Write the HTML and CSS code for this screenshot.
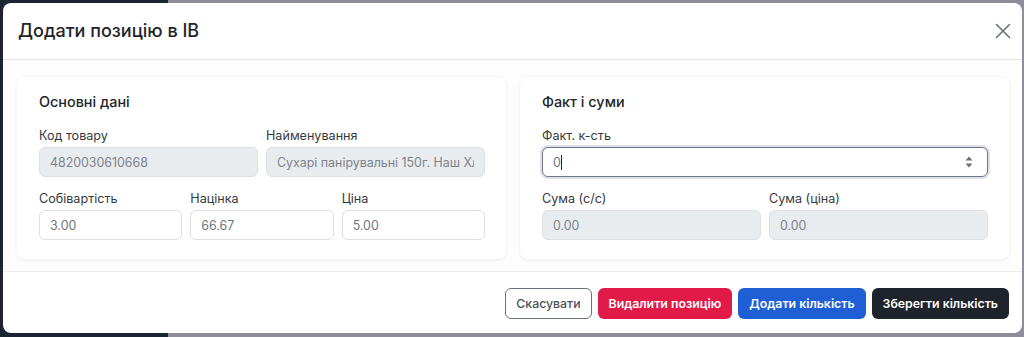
FILE: index.html
```html
<!DOCTYPE html>
<html lang="uk">
<head>
    <meta charset="UTF-8">
    <meta name="viewport" content="width=device-width, initial-scale=1.0">
    <title>Додати позицію в IB</title>
    <link rel="stylesheet" href="styles.css">
</head>
<body>
    <div class="modal">
        <header class="modal-header">
            <h1>Додати позицію в IB</h1>
            <button class="close-btn" aria-label="Закрити">
                <svg width="16" height="16" viewBox="0 0 16 16">
                    <path d="M1.5 1.5L14.5 14.5M14.5 1.5L1.5 14.5" stroke="#6b6f76" stroke-width="1.6" fill="none" stroke-linecap="round"/>
                </svg>
            </button>
        </header>
        <main class="modal-body">
            <section class="card">
                <h2>Основні дані</h2>
                <div class="row row-2">
                    <div class="field">
                        <label>Код товару</label>
                        <input class="input" type="text" value="4820030610668" disabled>
                    </div>
                    <div class="field">
                        <label>Найменування</label>
                        <input class="input" type="text" value="Сухарі панірувальні 150г. Наш Хлібокомбінат" disabled>
                    </div>
                </div>
                <div class="row row-3">
                    <div class="field">
                        <label>Собівартість</label>
                        <input class="input" type="text" value="3.00">
                    </div>
                    <div class="field">
                        <label>Націнка</label>
                        <input class="input" type="text" value="66.67">
                    </div>
                    <div class="field">
                        <label>Ціна</label>
                        <input class="input" type="text" value="5.00">
                    </div>
                </div>
            </section>
            <section class="card">
                <h2>Факт і суми</h2>
                <div class="row">
                    <div class="field">
                        <label>Факт. к-сть</label>
                        <div class="input input-focus">
                            <span class="value">0</span><span class="caret"></span>
                            <svg class="spinner" width="8" height="14" viewBox="0 0 8 14">
                                <path d="M4 1.5L7.5 5.5H0.5Z" fill="#6b6f76"/>
                                <path d="M4 12.5L7.5 8.5H0.5Z" fill="#6b6f76"/>
                            </svg>
                        </div>
                    </div>
                </div>
                <div class="row row-2">
                    <div class="field">
                        <label>Сума (с/с)</label>
                        <input class="input" type="text" value="0.00" disabled>
                    </div>
                    <div class="field">
                        <label>Сума (ціна)</label>
                        <input class="input" type="text" value="0.00" disabled>
                    </div>
                </div>
            </section>
        </main>
        <footer class="modal-footer">
            <button class="btn btn-outline">Скасувати</button>
            <button class="btn btn-danger">Видалити позицію</button>
            <button class="btn btn-primary">Додати кількість</button>
            <button class="btn btn-dark">Зберегти кількість</button>
        </footer>
    </div>
</body>
</html>
```

FILE: styles.css
```css
* {
    box-sizing: border-box;
}

body {
    margin: 0;
    padding: 3px 2px 4px 3px;
    height: 337px;
    overflow: hidden;
    font-family: Inter, "Noto Sans", sans-serif;
    color: #212529;
    background: linear-gradient(to right, #1c2331 168px, #8e8d98 168px);
}

.modal {
    width: 1019px;
    height: 330px;
    background-color: #fff;
    border-radius: 8px;
    display: flex;
    flex-direction: column;
    overflow: hidden;
}

.modal-header {
    display: flex;
    align-items: center;
    justify-content: space-between;
    height: 57px;
    padding: 0 10px 0 15px;
    border-bottom: 1px solid #e5e7eb;
}

.modal-header h1 {
    margin: 0;
    font-size: 18px;
    font-weight: 500;
    line-height: 28px;
    color: #212529;
}

.close-btn {
    border: none;
    background: none;
    padding: 0;
    width: 18px;
    height: 18px;
    display: flex;
    align-items: center;
    justify-content: center;
    cursor: pointer;
}

.modal-body {
    display: grid;
    grid-template-columns: 1fr 1fr;
    gap: 14px;
    padding: 17px 13px 12px 14px;
    background-color: #fdfdfd;
    border-bottom: 1px solid #eceef0;
}

.card {
    background-color: #fff;
    border-radius: 8px;
    box-shadow: 0 1px 4px rgba(0, 0, 0, 0.07);
    padding: 14px 21px 19px 22px;
}

.card h2 {
    margin: 0 0 14px;
    font-size: 14.4px;
    font-weight: 500;
    line-height: 22px;
}

.row {
    display: grid;
    gap: 8px;
}

.row + .row {
    margin-top: 13px;
}

.row-2 {
    grid-template-columns: 1fr 1fr;
}

.row-3 {
    grid-template-columns: 1fr 1fr 1fr;
}

.field label {
    display: block;
    font-size: 12.6px;
    line-height: 18px;
    margin-bottom: 2px;
    color: #343a40;
}

.input {
    display: flex;
    align-items: center;
    width: 100%;
    height: 30px;
    padding: 0 10px;
    font-family: inherit;
    font-size: 12.4px;
    color: #70767e;
    background-color: #fff;
    border: 1px solid #dcdfe3;
    border-radius: 6px;
    outline: none;
}

.input:disabled {
    background-color: #e9ecef;
    color: #7c828a;
    opacity: 1;
}

.input-focus {
    position: relative;
    border-color: #707784;
    box-shadow: 0 0 0 2px rgba(160, 170, 190, 0.35);
}

.caret {
    display: inline-block;
    width: 1px;
    height: 15px;
    background-color: #212529;
}

.spinner {
    position: absolute;
    right: 14px;
    top: 7px;
}

.modal-footer {
    display: flex;
    justify-content: flex-end;
    gap: 6px;
    padding: 16px 13px 0 0;
}

.btn {
    height: 31px;
    padding: 0 10px;
    font-family: inherit;
    font-size: 12.3px;
    font-weight: 600;
    border-radius: 6px;
    border: 1px solid transparent;
    color: #fff;
    cursor: pointer;
}

.btn-outline {
    background-color: #fff;
    border-color: #6c727a;
    color: #4b5158;
    font-weight: 500;
}

.btn-danger {
    background-color: #e11a48;
}

.btn-primary {
    background-color: #1f5fd6;
}

.btn-dark {
    background-color: #1e232c;
}
```
